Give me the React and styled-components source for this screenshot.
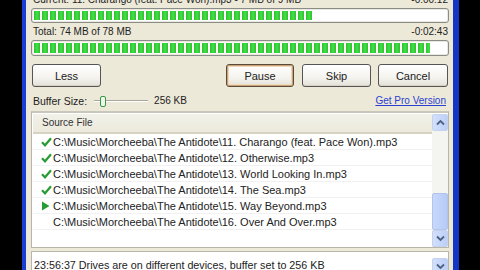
import React from "react";
import styled, { createGlobalStyle } from "styled-components";

const Global = createGlobalStyle`
  html, body { margin: 0; padding: 0; background: #000; }
  body { width: 480px; height: 270px; overflow: hidden; font-family: "Liberation Sans", Arial, sans-serif; }
`;

const Screen = styled.div`
  display: flex;
  height: 270px;
  width: 480px;
  background: #000;
  overflow: hidden;
`;

const LeftGap = styled.div`
  width: 22px;
  flex: none;
`;

const Window = styled.div`
  width: 437px;
  height: 270px;
  flex: none;
  box-sizing: border-box;
  border-left: 4px solid #1b3fd2;
  border-right: 6px solid #1436c4;
  background: #ece9d8;
  display: flex;
  flex-direction: column;
  padding: 0 4px 0 5px;
  font-size: 10px;
  color: #1a1a1a;
  overflow: hidden;
  & > * { flex: none; }
`;

const InfoRow = styled.div`
  display: flex;
  justify-content: space-between;
  padding: 0 1px 0 2px;
  height: 11px;
  line-height: 11px;
  margin-top: ${(p) => p.$top || 0}px;
  color: #222;
`;

const Bar = styled.div`
  height: ${(p) => p.$h || 16}px;
  box-sizing: border-box;
  border: 1px solid #8c8c86;
  border-radius: 3px;
  background: #fff;
  padding: 2px 2px;
  margin-top: ${(p) => p.$top || 0}px;
  box-shadow: inset 0 0 0 1px #e9e8e2;
`;

const Fill = styled.div`
  height: 100%;
  background: repeating-linear-gradient(
    90deg,
    #2cbf2c 0,
    #44e044 3px,
    #2cbf2c 6px,
    transparent 6px,
    transparent 8px
  );
`;

const ButtonRow = styled.div`
  display: flex;
  align-items: center;
  margin-top: 8px;
  height: 23px;
`;

const Button = styled.button`
  width: ${(p) => p.$w || 69}px;
  height: 23px;
  margin-left: ${(p) => p.$ml || 0}px;
  border: 1px solid ${(p) => (p.$default ? "#5a4a3a" : "#555")};
  border-radius: 3px;
  background: linear-gradient(#ffffff, #f4f3ee 60%, #e3e1d8);
  font-family: inherit;
  font-size: 11px;
  color: #222;
  padding: 0;
  box-shadow: ${(p) =>
    p.$default ? "inset 0 0 0 1px #c9a27a, inset 0 0 0 2px #f0d9b8" : "inset 0 -1px 0 #d6d0c5"};
  flex: none;
`;

const BufferRow = styled.div`
  display: flex;
  align-items: center;
  height: 13px;
  margin-top: 7px;
  padding: 0 2px;
`;

const Label = styled.span`
  color: #222;
  white-space: nowrap;
  font-size: ${(p) => p.$size || 10}px;
`;

const Slider = styled.div`
  position: relative;
  width: 54px;
  height: 10px;
  margin: 0 6px 0 7px;
  flex: none;
  &::before {
    content: "";
    position: absolute;
    left: 0;
    right: 0;
    top: 4px;
    height: 1px;
    background: #a8a69c;
    border-bottom: 1px solid #fff;
  }
`;

const Thumb = styled.div`
  position: absolute;
  left: 6px;
  top: 0;
  width: 4px;
  height: 9px;
  border: 1px solid #2f9a3f;
  border-radius: 2px;
  background: #f4f4ee;
`;

const Link = styled.a`
  margin-left: auto;
  margin-right: 1px;
  color: #2d3fd0;
  text-decoration: underline;
  white-space: nowrap;
`;

const ListBox = styled.div`
  margin-top: 4px;
  height: 137px;
  box-sizing: border-box;
  border: 1px solid #b8b6aa;
  border-top: 2px solid #c9c7bb;
  background: #fff;
  display: flex;
`;

const ListMain = styled.div`
  flex: 1;
  display: flex;
  flex-direction: column;
  margin: 1px 0 0 1px;
  overflow: hidden;
`;

const Header = styled.div`
  height: 18px;
  line-height: 18px;
  background: linear-gradient(#f2f1ea, #ebeadb);
  border-bottom: 2px solid #d6d3c4;
  padding-left: 9px;
  color: #333;
  flex: none;
`;

const Row = styled.div`
  display: flex;
  align-items: center;
  height: 16px;
  border-bottom: 1px solid #f1f1f1;
  box-sizing: border-box;
  white-space: nowrap;
  color: #222;
  font-size: 11px;
  flex: none;
`;

const IconBox = styled.span`
  width: 12px;
  height: 16px;
  display: flex;
  align-items: center;
  padding-left: 8px;
  flex: none;
`;

const ScrollBar = styled.div`
  width: 16px;
  margin: 1px 0 0 0;
  display: flex;
  flex-direction: column;
  background: #f4f4f0;
  flex: none;
`;

const ScrollBtn = styled.div`
  width: 16px;
  height: 17px;
  border-radius: 2px;
  background: linear-gradient(90deg, #d3e0fb, #bccff7);
  border: 1px solid #c4d2ef;
  box-sizing: border-box;
  display: flex;
  align-items: center;
  justify-content: center;
  flex: none;
`;

const Track = styled.div`
  flex: 1;
  display: flex;
  flex-direction: column;
  justify-content: flex-end;
`;

const ScrollThumb = styled.div`
  height: 37px;
  border-radius: 2px;
  background: linear-gradient(90deg, #c8d8fb, #b5cbf6);
  border: 1px solid #b0c4ec;
  box-sizing: border-box;
`;

const Status = styled.div`
  margin-top: 3px;
  height: 26px;
  border: 1px solid #b8b6aa;
  background: #fff;
  display: flex;
  align-items: flex-start;
`;

const StatusText = styled.div`
  flex: 1;
  padding: 7px 0 0 2px;
  line-height: 13px;
  font-size: 10.75px;
  color: #222;
  white-space: nowrap;
`;

const StatusDrop = styled(ScrollBtn)`
  margin-top: 6px;
  height: 16px;
`;

const Chevron = ({ up }) => (
  <svg width="9" height="7" viewBox="0 0 9 7">
    <path
      d={up ? "M1 5.5 L4.5 2 L8 5.5" : "M1 1.5 L4.5 5 L8 1.5"}
      fill="none"
      stroke="#4d6185"
      strokeWidth="1.8"
    />
  </svg>
);

const Check = () => (
  <svg width="11" height="10" viewBox="0 0 11 10">
    <path d="M1 5.2 L4 8.3 L10 1.2" fill="none" stroke="#2a9a32" strokeWidth="2.2" />
  </svg>
);

const Play = () => (
  <svg width="9" height="10" viewBox="0 0 9 10">
    <path d="M1 0.5 L8.5 5 L1 9.5 Z" fill="#2a9a32" />
  </svg>
);

const files = [
  { s: "done", n: "11. Charango (feat. Pace Won).mp3" },
  { s: "done", n: "12. Otherwise.mp3" },
  { s: "done", n: "13. World Looking In.mp3" },
  { s: "done", n: "14. The Sea.mp3" },
  { s: "play", n: "15. Way Beyond.mp3" },
  { s: "wait", n: "16. Over And Over.mp3" },
];

export default function App() {
  return (
    <Screen>
      <Global />
      <LeftGap />
      <Window>
        <InfoRow $top={-6}>
          <Label>Current: 11. Charango (feat. Pace Won).mp3 - 7 MB of 9 MB</Label>
          <Label>-0:00:12</Label>
        </InfoRow>
        <Bar $top={3} $h={15}>
          <Fill style={{ width: "68%" }} />
        </Bar>
        <InfoRow $top={3}>
          <Label>Total: 74 MB of 78 MB</Label>
          <Label>-0:02:43</Label>
        </InfoRow>
        <Bar $top={3}>
          <Fill style={{ width: "96%" }} />
        </Bar>
        <ButtonRow>
          <Button $w={69} $ml={1}>Less</Button>
          <Button $w={68} $ml={125} $default>Pause</Button>
          <Button $w={69} $ml={8}>Skip</Button>
          <Button $w={70} $ml={7}>Cancel</Button>
        </ButtonRow>
        <BufferRow>
          <Label $size={10.5}>Buffer Size:</Label>
          <Slider>
            <Thumb />
          </Slider>
          <Label>256 KB</Label>
          <Link>Get Pro Version</Link>
        </BufferRow>
        <ListBox>
          <ListMain>
            <Header>Source File</Header>
            {files.map((f) => (
              <Row key={f.n}>
                <IconBox>{f.s === "done" ? <Check /> : f.s === "play" ? <Play /> : null}</IconBox>
                C:\Music\Morcheeba\The Antidote\{f.n}
              </Row>
            ))}
          </ListMain>
          <ScrollBar>
            <ScrollBtn>
              <Chevron up />
            </ScrollBtn>
            <Track>
              <ScrollThumb />
            </Track>
            <ScrollBtn>
              <Chevron />
            </ScrollBtn>
          </ScrollBar>
        </ListBox>
        <Status>
          <StatusText>23:56:37 Drives are on different devices, buffer set to 256 KB</StatusText>
          <StatusDrop>
            <Chevron />
          </StatusDrop>
        </Status>
      </Window>
    </Screen>
  );
}
